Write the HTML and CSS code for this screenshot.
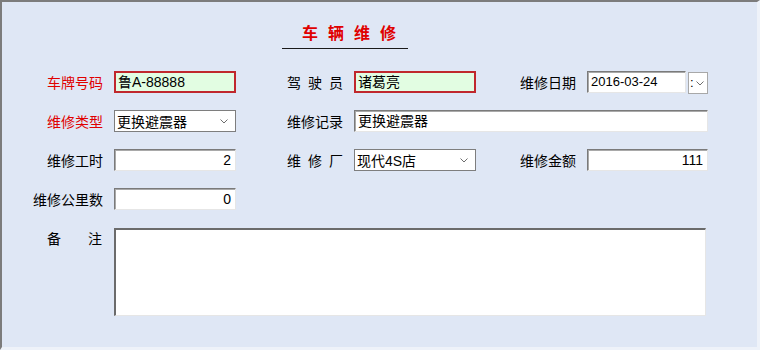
FILE: index.html
```html
<!DOCTYPE html>
<html lang="zh-CN">
<head>
    <meta charset="UTF-8">
    <title>车辆维修</title>
    <link rel="stylesheet" href="styles.css">
</head>
<body>
    <div class="window">
        <div class="title">车辆维修</div>

        <div class="form">
            <label class="label required">车牌号码</label>
            <div class="field must">鲁A-88888</div>
            <label class="label spaced">驾驶员</label>
            <div class="field must">诸葛亮</div>
            <label class="label">维修日期</label>
            <div class="date-group">
                <div class="field date">2016-03-24</div>
                <div class="date-btn">
                    <span class="colon">:</span>
                    <svg viewBox="0 0 8 5" class="chevron"><polyline points="0.5 0.5 4 4 7.5 0.5"></polyline></svg>
                </div>
            </div>

            <label class="label required">维修类型</label>
            <div class="select">
                <span>更换避震器</span>
                <svg viewBox="0 0 8 5" class="chevron"><polyline points="0.5 0.5 4 4 7.5 0.5"></polyline></svg>
            </div>
            <label class="label">维修记录</label>
            <div class="field wide">更换避震器</div>

            <label class="label">维修工时</label>
            <div class="field num">2</div>
            <label class="label spaced">维修厂</label>
            <div class="select">
                <span>现代4S店</span>
                <svg viewBox="0 0 8 5" class="chevron"><polyline points="0.5 0.5 4 4 7.5 0.5"></polyline></svg>
            </div>
            <label class="label">维修金额</label>
            <div class="field num">111</div>

            <label class="label">维修公里数</label>
            <div class="field num">0</div>

            <label class="label memo"><span>备</span><span>注</span></label>
            <div class="field memo-box"></div>
        </div>
    </div>
</body>
</html>
```

FILE: styles.css
```css
* {
    margin: 0;
    padding: 0;
    box-sizing: border-box;
}

body {
    background: #dfe7f5;
    font-family: "Noto Sans CJK SC", sans-serif;
    font-size: 14px;
    color: #000;
}

.window {
    width: 760px;
    height: 350px;
    background: #dfe7f5;
    border-top: 2px solid #7c7c7c;
    border-left: 2px solid #7c7c7c;
    border-right: 3px solid #eef2f9;
    border-bottom: 3px solid #eef2f9;
}

.title {
    width: 126px;
    margin: 20px 0 0 280px;
    padding: 0 0 6px 20px;
    border-bottom: 1px solid #1a1a1a;
    color: #e00000;
    font-size: 16px;
    font-weight: bold;
    line-height: 20px;
    letter-spacing: 10px;
    white-space: nowrap;
}

.form {
    display: grid;
    grid-template-columns: 112px 122px 118px 122px 111px 121px;
    grid-template-rows: repeat(4, 22px) 90px;
    row-gap: 17px;
    margin-top: 22px;
}

.label {
    display: flex;
    align-items: center;
    justify-content: flex-end;
    padding-right: 11px;
    line-height: 22px;
    white-space: nowrap;
}

.label.required {
    color: #e00000;
}

.label.spaced {
    letter-spacing: 7px;
    padding-right: 4px;
}

.field {
    height: 22px;
    background: #fff;
    border: 1px solid;
    border-color: #7a7a7a #e6e6e6 #e6e6e6 #7a7a7a;
    box-shadow: inset 1px 1px 0 #a9a9a9;
    padding: 0 4px 0 3px;
    line-height: 20px;
    font-family: "Liberation Sans", "Noto Sans CJK SC", sans-serif;
    font-size: 14px;
    white-space: nowrap;
    overflow: hidden;
}

.field.must {
    background: #e2fde2;
    border: 2px solid #c0282d;
    box-shadow: none;
    padding-left: 2px;
    line-height: 18px;
}

.field.num {
    text-align: right;
}

.field.wide {
    grid-column: 4 / 7;
}

.date-group {
    display: flex;
    gap: 2px;
}

.field.date {
    width: 99px;
    font-size: 13px;
}

.date-btn {
    flex: 1;
    display: flex;
    align-items: center;
    height: 22px;
    margin-top: 1px;
    background: #fff;
    border: 1px solid #a8a8a8;
    padding-left: 1px;
    gap: 2px;
}

.colon {
    font-family: "Liberation Sans", sans-serif;
    font-size: 13px;
    line-height: 18px;
}

.chevron {
    width: 8px;
    height: 5px;
    fill: none;
    stroke: #6d6d6d;
    stroke-width: 1;
}

.select {
    display: flex;
    align-items: center;
    justify-content: space-between;
    height: 22px;
    background: #fff;
    border: 1px solid #7e7e7e;
    padding: 0 7px 0 2px;
    font-family: "Liberation Sans", "Noto Sans CJK SC", sans-serif;
    white-space: nowrap;
}

.label.memo {
    grid-column: 1;
    align-items: flex-start;
    justify-content: space-between;
    padding: 2px 12px 0 45px;
    line-height: 18px;
}

.field.memo-box {
    grid-column: 2 / 7;
    width: 592px;
    height: 88px;
    margin-top: 1px;
    border-top-width: 2px;
    border-left-width: 2px;
    border-top-color: #6b6b6b;
    border-left-color: #6b6b6b;
    box-shadow: none;
}
```
